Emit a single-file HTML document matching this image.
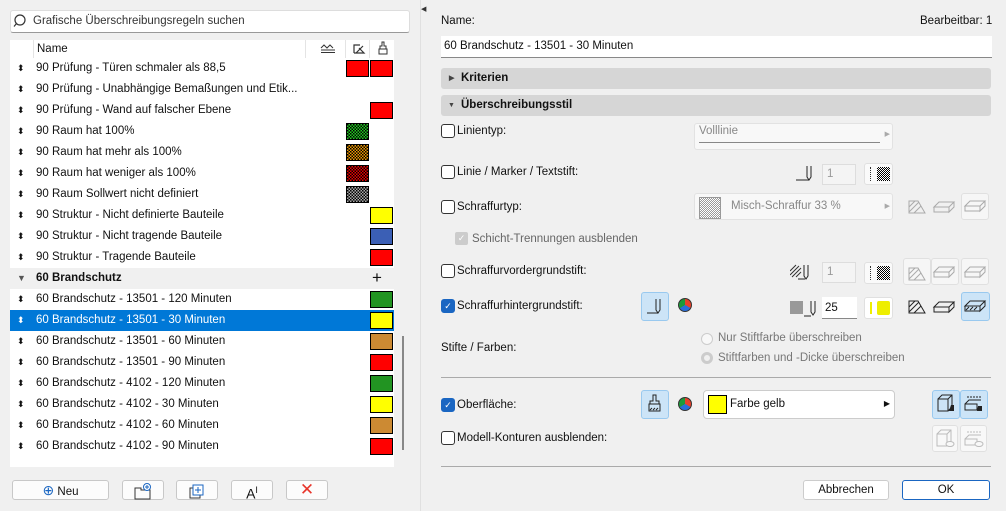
<!DOCTYPE html>
<html><head><meta charset="utf-8"><style>
*{box-sizing:border-box;margin:0;padding:0}
body{width:1006px;height:511px;background:#f0f0f0;font-family:"Liberation Sans",sans-serif;font-size:11.5px;color:#111;position:relative;overflow:hidden}
.a{position:absolute}
.row{position:absolute;left:10px;width:384px;height:21px;line-height:21px}
.row .t{position:absolute;left:26px;white-space:nowrap}
.row .ar{position:absolute;left:7px;top:0;font-size:9px;line-height:21px}
.sw{position:absolute;top:2px;width:23px;height:17px;border:1.5px solid #000}
.c1{left:336px}.c2{left:360px}
.sel{background:#0078d7;color:#fff}
.btn{position:absolute;background:#fcfcfc;border:1px solid #c8c8c8;border-radius:3px;text-align:center;line-height:19px}
.cb{position:absolute;width:14px;height:14px;border:1px solid #333;border-radius:3px;background:#fff}
.cbon{background:#1a66c2;border-color:#1a66c2;color:#fff;font-size:9px;line-height:12px;text-align:center}
.lbl{position:absolute;white-space:nowrap}
.dd{position:absolute;background:#f8f8f8;border:1px solid #e2e2e2;border-radius:3px;color:#888}
.ib{position:absolute;width:28px;height:28px;border:1px solid #e0e0e0;border-radius:3px;background:#f6f6f6}
.on{background:#cce4f7;border-color:#99c9ef}
.inp{position:absolute;background:#f4f4f4;border:1px solid #ddd;color:#999;padding-left:4px;line-height:19px}
.bar{position:absolute;left:441px;width:550px;height:21px;background:#d6d6d6;border-radius:3px;font-weight:bold;line-height:21px;padding-left:20px}
</style></head><body>
<!-- search -->
<div class="a" style="left:10px;top:10px;width:400px;height:23px;background:#fff;border:1px solid #ddd;border-bottom:1px solid #999;border-radius:3px"></div>
<svg class="a" style="left:13px;top:13px" width="16" height="16"><circle cx="7" cy="7" r="5" fill="none" stroke="#333" stroke-width="1.2"/><line x1="3.5" y1="10.5" x2="1" y2="13.5" stroke="#333" stroke-width="1.2"/></svg>
<div class="lbl" style="left:33px;top:15px;color:#333">Grafische Überschreibungsregeln suchen</div>
<!-- list -->
<div class="a" style="left:10px;top:40px;width:384px;height:427px;background:#fff"></div>
<div class="lbl" style="left:37px;top:43px">Name</div>
<div class="a" style="left:33px;top:40px;width:1px;height:18px;background:#e4e4e4"></div>
<div class="a" style="left:305px;top:40px;width:1px;height:18px;background:#e4e4e4"></div>
<div class="a" style="left:345px;top:40px;width:1px;height:18px;background:#e4e4e4"></div>
<div class="a" style="left:369px;top:40px;width:1px;height:18px;background:#e4e4e4"></div>
<svg class="a" style="left:320px;top:42px" width="16" height="12"><path d="M1 6l3-3 3 3 3-3 3 3M1 8h14M1 10.5h14" fill="none" stroke="#333"/></svg>
<svg class="a" style="left:352px;top:42px" width="14" height="13"><path d="M2 11V3h6M2 11h10L7 6M4 11l7-7" fill="none" stroke="#333" stroke-width="1.2"/></svg>
<svg class="a" style="left:377px;top:41px" width="12" height="14"><path d="M5 1h2v4h2v3H3V5h2zM2 8h8v5H2z" fill="none" stroke="#333"/></svg>

<div class="row" style="top:58px"><span class="ar">⬍</span><span class="t">90 Prüfung - Türen schmaler als 88,5</span><div class="sw c1" style="background:#f00"></div><div class="sw c2" style="background:#f00"></div></div>
<div class="row" style="top:79px"><span class="ar">⬍</span><span class="t">90 Prüfung - Unabhängige Bemaßungen und Etik...</span></div>
<div class="row" style="top:100px"><span class="ar">⬍</span><span class="t">90 Prüfung - Wand auf falscher Ebene</span><div class="sw c2" style="background:#f00"></div></div>
<div class="row" style="top:121px"><span class="ar">⬍</span><span class="t">90 Raum hat 100%</span><div class="sw c1" style="background:repeating-conic-gradient(#2c2 0 25%,#000 0 50%) 0 0/3px 3px"></div></div>
<div class="row" style="top:142px"><span class="ar">⬍</span><span class="t">90 Raum hat mehr als 100%</span><div class="sw c1" style="background:repeating-conic-gradient(#e90 0 25%,#000 0 50%) 0 0/3px 3px"></div></div>
<div class="row" style="top:163px"><span class="ar">⬍</span><span class="t">90 Raum hat weniger als 100%</span><div class="sw c1" style="background:repeating-conic-gradient(#e00 0 25%,#000 0 50%) 0 0/3px 3px"></div></div>
<div class="row" style="top:184px"><span class="ar">⬍</span><span class="t">90 Raum Sollwert nicht definiert</span><div class="sw c1" style="background:repeating-conic-gradient(#aaa 0 25%,#000 0 50%) 0 0/3px 3px"></div></div>
<div class="row" style="top:205px"><span class="ar">⬍</span><span class="t">90 Struktur - Nicht definierte Bauteile</span><div class="sw c2" style="background:#ff0"></div></div>
<div class="row" style="top:226px"><span class="ar">⬍</span><span class="t">90 Struktur - Nicht tragende Bauteile</span><div class="sw c2" style="background:#3b5fb5"></div></div>
<div class="row" style="top:247px"><span class="ar">⬍</span><span class="t">90 Struktur - Tragende Bauteile</span><div class="sw c2" style="background:#f00"></div></div>
<div class="row" style="top:268px;background:#f0f0f0"><span class="ar" style="color:#555">▼</span><span class="t" style="font-weight:bold">60 Brandschutz</span><span style="position:absolute;left:362px;font-size:17px;top:-1px">+</span></div>
<div class="row" style="top:289px"><span class="ar">⬍</span><span class="t">60 Brandschutz - 13501 - 120 Minuten</span><div class="sw c2" style="background:#229422"></div></div>
<div class="row sel" style="top:310px"><span class="ar">⬍</span><span class="t">60 Brandschutz - 13501 - 30 Minuten</span><div class="sw c2" style="background:#ff0"></div></div>
<div class="row" style="top:331px"><span class="ar">⬍</span><span class="t">60 Brandschutz - 13501 - 60 Minuten</span><div class="sw c2" style="background:#cc8a33"></div></div>
<div class="row" style="top:352px"><span class="ar">⬍</span><span class="t">60 Brandschutz - 13501 - 90 Minuten</span><div class="sw c2" style="background:#f00"></div></div>
<div class="row" style="top:373px"><span class="ar">⬍</span><span class="t">60 Brandschutz - 4102 - 120 Minuten</span><div class="sw c2" style="background:#229422"></div></div>
<div class="row" style="top:394px"><span class="ar">⬍</span><span class="t">60 Brandschutz - 4102 - 30 Minuten</span><div class="sw c2" style="background:#ff0"></div></div>
<div class="row" style="top:415px"><span class="ar">⬍</span><span class="t">60 Brandschutz - 4102 - 60 Minuten</span><div class="sw c2" style="background:#cc8a33"></div></div>
<div class="row" style="top:436px"><span class="ar">⬍</span><span class="t">60 Brandschutz - 4102 - 90 Minuten</span><div class="sw c2" style="background:#f00"></div></div>
<div class="a" style="left:402px;top:336px;width:2px;height:114px;background:#888"></div>
<!-- bottom buttons -->
<div class="btn" style="left:12px;top:480px;width:97px;height:20px"><span style="color:#1a66c2;font-size:14px">⊕</span> Neu</div>
<div class="btn" style="left:122px;top:480px;width:42px;height:20px"><svg width="20" height="18" style="margin-top:1px"><path d="M2 6h6v2h9v9H2z" fill="none" stroke="#333"/><circle cx="14" cy="5" r="3.5" fill="#fff" stroke="#1a66c2"/><path d="M14 3v4M12 5h4" stroke="#1a66c2"/></svg></div>
<div class="btn" style="left:176px;top:480px;width:42px;height:20px"><svg width="20" height="18" style="margin-top:1px"><rect x="3" y="6" width="10" height="10" fill="none" stroke="#333"/><rect x="6" y="3" width="10" height="10" fill="#fff" stroke="#1a66c2"/><path d="M11 5v6M8 8h6" stroke="#1a66c2"/></svg></div>
<div class="btn" style="left:231px;top:480px;width:42px;height:20px;font-size:14px">A<sup style="font-size:9px">I</sup></div>
<div class="btn" style="left:286px;top:480px;width:42px;height:20px;color:#e8352b;font-size:17px;line-height:18px">✕</div>
<!-- divider -->
<div class="a" style="left:420px;top:0;width:1px;height:511px;background:#e0e0e0"></div>
<div class="a" style="left:421px;top:5px;font-size:7px;color:#333">◀</div>
<!-- right -->
<div class="lbl" style="left:441px;top:15px">Name:</div>
<div class="lbl" style="left:920px;top:15px">Bearbeitbar: 1</div>
<div class="a" style="left:441px;top:36px;width:551px;height:22px;background:#fff;border-bottom:1px solid #888;padding-left:3px;line-height:21px">60 Brandschutz - 13501 - 30 Minuten</div>
<div class="bar" style="top:68px"><span style="position:absolute;left:8px;font-size:7px;color:#444">▶</span>Kriterien</div>
<div class="bar" style="top:95px"><span style="position:absolute;left:7px;font-size:7px;color:#444">▼</span>Überschreibungsstil</div>

<div class="cb" style="left:441px;top:124px"></div><div class="lbl" style="left:457px;top:125px">Linientyp:</div>
<div class="dd" style="left:694px;top:123px;width:199px;height:27px"><span style="position:absolute;left:4px;top:1px">Volllinie</span><div style="position:absolute;left:4px;right:12px;top:18px;height:1px;background:#888"></div><span style="position:absolute;right:2px;top:6px;font-size:7px;color:#aaa">▶</span></div>

<div class="cb" style="left:441px;top:165px"></div><div class="lbl" style="left:457px;top:166px">Linie / Marker / Textstift:</div>
<svg class="a" style="left:796px;top:164px" width="22" height="18"><path d="M0 16h13M11 2v11l2 3 2-3V2" fill="none" stroke="#222"/></svg>
<div class="inp" style="left:822px;top:164px;width:34px;height:21px">1</div>
<div class="ib" style="left:864px;top:163px;height:22px;width:29px;background:#fafafa"><div style="position:absolute;left:5px;top:3px;width:1px;height:14px;border-left:1px dotted #333"></div><div style="position:absolute;left:12px;top:3px;width:13px;height:14px;background:repeating-conic-gradient(#000 0 25%,#fff 0 50%) 0 0/2px 2px"></div></div>

<div class="cb" style="left:441px;top:200px"></div><div class="lbl" style="left:457px;top:201px">Schraffurtyp:</div>
<div class="dd" style="left:694px;top:193px;width:199px;height:27px"><div style="position:absolute;left:4px;top:3px;width:22px;height:22px;border:1px solid #999;background:repeating-conic-gradient(#999 0 25%,#fff 0 50%) 0 0/2px 2px"></div><span style="position:absolute;left:36px;top:6px">Misch-Schraffur 33 %</span><span style="position:absolute;right:2px;top:8px;font-size:7px;color:#aaa">▶</span></div>
<svg class="a" style="left:906px;top:198px" width="22" height="18"><path d="M3 15V3h9l7 12z" fill="none" stroke="#aaa"/><path d="M3 9l6-6M3 14l10-10M8 15l7-7" stroke="#aaa"/></svg>
<svg class="a" style="left:932px;top:198px" width="24" height="18"><path d="M2 9l5-5h15l-5 5zM2 9h15v5H2zM17 9v5l5-5V4" fill="none" stroke="#aaa"/></svg>
<div class="ib" style="left:961px;top:193px;height:27px"><svg width="26" height="26"><path d="M3 12l5-5h15l-5 5zM3 12h15v5H3zM18 12v5l5-5V7" fill="none" stroke="#aaa"/></svg></div>

<div class="a" style="left:455px;top:232px;width:13px;height:13px;background:#ccc;border-radius:2px;color:#fff;font-size:9px;text-align:center;line-height:13px">✓</div>
<div class="lbl" style="left:472px;top:233px;color:#666">Schicht-Trennungen ausblenden</div>

<div class="cb" style="left:441px;top:264px"></div><div class="lbl" style="left:457px;top:265px">Schraffurvordergrundstift:</div>
<svg class="a" style="left:790px;top:263px" width="28" height="18"><path d="M0 8l6-6M0 12l9-9M2 14l9-9M6 14l5-5" stroke="#333"/><path d="M8 16h7M14 2v11l2 3 2-3V2" fill="none" stroke="#222"/></svg>
<div class="inp" style="left:822px;top:262px;width:34px;height:21px">1</div>
<div class="ib" style="left:864px;top:262px;height:22px;width:29px;background:#fafafa"><div style="position:absolute;left:5px;top:3px;width:1px;height:14px;border-left:1px dotted #333"></div><div style="position:absolute;left:12px;top:3px;width:13px;height:14px;background:repeating-conic-gradient(#000 0 25%,#fff 0 50%) 0 0/2px 2px"></div></div>
<div class="ib" style="left:903px;top:258px;height:27px"><svg width="26" height="26"><path d="M5 21V9h9l7 12z" fill="none" stroke="#aaa"/><path d="M5 15l6-6M5 20l10-10M10 21l7-7" stroke="#aaa"/></svg></div>
<div class="ib" style="left:931px;top:258px;height:27px"><svg width="26" height="26"><path d="M2 13l5-5h15l-5 5zM2 13h15v5H2zM17 13v5l5-5V8" fill="none" stroke="#aaa"/></svg></div>
<div class="ib" style="left:961px;top:258px;height:27px"><svg width="26" height="26"><path d="M3 13l5-5h15l-5 5zM3 13h15v5H3zM18 13v5l5-5V8" fill="none" stroke="#aaa"/></svg></div>

<div class="cb cbon" style="left:441px;top:299px">✓</div><div class="lbl" style="left:457px;top:300px">Schraffurhintergrundstift:</div>
<div class="ib on" style="left:641px;top:292px;width:28px;height:29px"><svg width="26" height="26"><path d="M5 20h11M14 6v11l2 3 2-3V6" fill="none" stroke="#222"/></svg></div>
<div class="a" style="left:678px;top:298px;width:14px;height:14px;border-radius:50%;background:conic-gradient(#e8412b 0 33%,#2a6fd9 0 66%,#1d9a3a 0);border:1px solid #333"></div>
<div class="a" style="left:790px;top:301px;width:13px;height:13px;background:#999"></div>
<svg class="a" style="left:804px;top:298px" width="16" height="20"><path d="M0 18h7M7 3v11l2 3 2-3V3" fill="none" stroke="#222"/></svg>
<div class="a" style="left:822px;top:297px;width:35px;height:22px;background:#fff;border-bottom:1px solid #888;padding-left:3px;line-height:22px">25</div>
<div class="ib" style="left:864px;top:297px;height:22px;width:29px;background:#fff"><div style="position:absolute;left:5px;top:4px;width:2px;height:12px;background:#ee0"></div><div style="position:absolute;left:12px;top:3px;width:13px;height:14px;background:#ee0;border-radius:2px"></div></div>
<svg class="a" style="left:906px;top:298px" width="22" height="18"><path d="M3 15V3h9l7 12z" fill="none" stroke="#222"/><path d="M3 9l6-6M3 14l10-10M8 15l7-7" stroke="#222"/></svg>
<svg class="a" style="left:932px;top:298px" width="24" height="18"><path d="M2 9l5-5h15l-5 5zM2 9h15v5H2zM17 9v5l5-5V4" fill="none" stroke="#222"/></svg>
<div class="ib on" style="left:961px;top:292px;height:29px;width:29px"><svg width="26" height="26"><path d="M3 13l5-5h15l-5 5zM3 13h15v5H3zM18 13v5l5-5V8" fill="none" stroke="#222"/><path d="M4 17l3-3M8 17l3-3M12 17l3-3" stroke="#222"/></svg></div>

<div class="lbl" style="left:441px;top:342px">Stifte / Farben:</div>
<div class="a" style="left:701px;top:333px;width:12px;height:12px;border:1px solid #ccc;border-radius:50%;background:#f8f8f8"></div>
<div class="lbl" style="left:718px;top:332px;color:#777">Nur Stiftfarbe überschreiben</div>
<div class="a" style="left:701px;top:352px;width:12px;height:12px;border:3px solid #ccc;border-radius:50%;background:#f0f0f0"></div>
<div class="lbl" style="left:718px;top:352px;color:#777">Stiftfarben und -Dicke überschreiben</div>
<div class="a" style="left:441px;top:377px;width:550px;height:1px;background:#aaa"></div>

<div class="cb cbon" style="left:441px;top:398px">✓</div><div class="lbl" style="left:457px;top:399px">Oberfläche:</div>
<div class="ib on" style="left:641px;top:390px;height:29px"><svg width="26" height="26"><path d="M11 4h3v6h3v3H8v-3h3zM7 13h11v7H7z" fill="none" stroke="#222"/><path d="M8 19l2-2M11 19l2-2M14 19l2-2" stroke="#222"/></svg></div>
<div class="a" style="left:678px;top:397px;width:14px;height:14px;border-radius:50%;background:conic-gradient(#e8412b 0 33%,#2a6fd9 0 66%,#1d9a3a 0);border:1px solid #333"></div>
<div class="a" style="left:703px;top:390px;width:192px;height:29px;background:#fff;border:1px solid #ccc;border-radius:4px"><div style="position:absolute;left:4px;top:4px;width:19px;height:19px;background:#ff0;border:1px solid #000"></div><span style="position:absolute;left:26px;top:7px">Farbe gelb</span><span style="position:absolute;right:4px;top:8px;font-size:8px">▶</span></div>
<div class="ib on" style="left:932px;top:390px;height:29px;width:28px"><svg width="26" height="26"><path d="M5 8h10v12H5zM5 8l4-4h10v12l-4 4M15 8l4-4" fill="none" stroke="#222"/><path d="M18 14h3v6h-5z" fill="#222"/></svg></div>
<div class="ib on" style="left:960px;top:390px;height:29px;width:28px"><svg width="26" height="26"><path d="M4 13l4-4h12M4 13h12v6H4z" fill="none" stroke="#222"/><path d="M6 6h14" stroke="#222" stroke-dasharray="2 1"/><path d="M17 15h4v5h-5z" fill="#222"/></svg></div>

<div class="cb" style="left:441px;top:431px"></div><div class="lbl" style="left:457px;top:432px">Modell-Konturen ausblenden:</div>
<div class="ib" style="left:932px;top:425px;height:27px;width:26px;background:#f8f8f8"><svg width="24" height="25"><path d="M4 8h10v12H4zM4 8l4-4h10v12l-4 4M14 8l4-4" fill="none" stroke="#bbb"/><ellipse cx="17" cy="18" rx="4" ry="2.5" fill="#f8f8f8" stroke="#bbb"/></svg></div>
<div class="ib" style="left:960px;top:425px;height:27px;width:27px;background:#f8f8f8"><svg width="25" height="25"><path d="M4 13l4-4h12M4 13h12v6H4z" fill="none" stroke="#bbb"/><path d="M6 6h14" stroke="#bbb" stroke-dasharray="2 1"/><ellipse cx="18" cy="18" rx="4" ry="2.5" fill="#f8f8f8" stroke="#bbb"/></svg></div>
<div class="a" style="left:441px;top:466px;width:550px;height:1px;background:#aaa"></div>

<div class="btn" style="left:803px;top:480px;width:86px;height:20px;background:#fff;border-color:#ccc">Abbrechen</div>
<div class="btn" style="left:902px;top:480px;width:88px;height:20px;background:#fff;border-color:#1a66c2">OK</div>
</body></html>
